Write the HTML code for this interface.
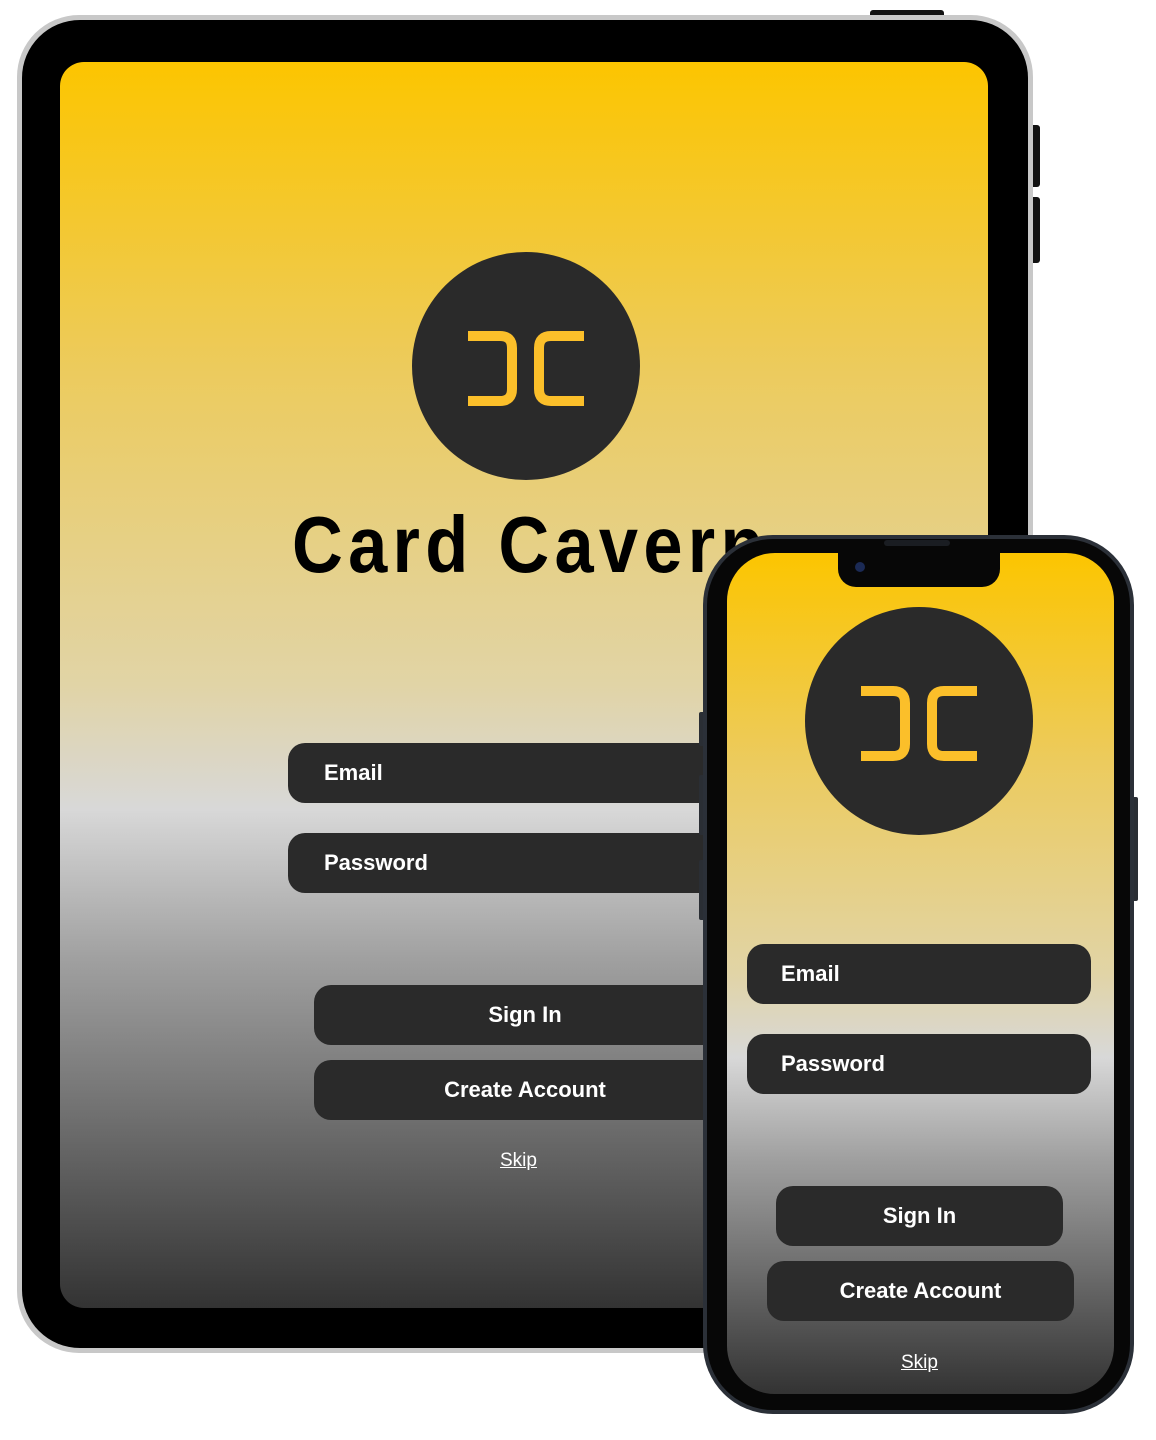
<!DOCTYPE html>
<html><head><meta charset="utf-8"><style>
html,body{margin:0;padding:0;background:#fff;width:1156px;height:1440px;overflow:hidden;position:relative;font-family:"Liberation Sans",sans-serif}
.abs{position:absolute}
.scr{background:linear-gradient(to bottom,#fcc500 0%,#eccb5e 25%,#e1d4a6 50%,#d8d8d8 60%,#a0a0a0 72%,#6e6e6e 85%,#333 100%)}
.fld{position:absolute;background:#2a2a2a;border-radius:17px;color:#fff;font-weight:bold;font-size:22px;line-height:60px;height:60px;box-sizing:border-box}
.btn{text-align:center}
</style></head><body>
<div class="abs" style="left:870px;top:10px;width:74px;height:12px;background:#111;border-radius:3px"></div>
<div class="abs" style="left:1026px;top:125px;width:14px;height:62px;background:#111;border-radius:3px"></div>
<div class="abs" style="left:1026px;top:197px;width:14px;height:66px;background:#111;border-radius:3px"></div>
<div class="abs" style="left:17px;top:15px;width:1016px;height:1338px;border-radius:62px;background:#c8c8c8"></div>
<div class="abs" style="left:22px;top:20px;width:1006px;height:1328px;border-radius:58px;background:#000"></div>
<div class="abs scr" style="left:60px;top:62px;width:928px;height:1246px;border-radius:24px;overflow:hidden">
  <div class="abs" style="left:232px;top:438px;font-weight:bold;font-size:80px;letter-spacing:6px;color:#000;white-space:nowrap;line-height:90px;transform:scaleX(0.88);transform-origin:0 0">Card Cavern</div>
  <div class="fld" style="left:228px;top:681px;width:700px;padding-left:36px">Email</div>
  <div class="fld" style="left:228px;top:771px;width:700px;padding-left:36px">Password</div>
  <div class="fld btn" style="left:254px;top:923px;width:422px">Sign In</div>
  <div class="fld btn" style="left:254px;top:998px;width:422px">Create Account</div>
  <div class="abs" style="left:440px;top:1088px;color:#fff;font-size:19px;text-decoration:underline">Skip</div>
</div>
<svg class="abs" style="left:0;top:0" width="1156" height="1440">
  <circle cx="526" cy="366" r="114" fill="#2a2a2a"/>
  <g fill="none" stroke="#fbbf2a" stroke-width="10">
    <path d="M468,336 H500 Q512,336 512,348 V389 Q512,401 500,401 H468"/>
    <path d="M584,336 H551 Q539,336 539,348 V389 Q539,401 551,401 H584"/>
  </g>
</svg>
<div class="abs" style="left:699px;top:712px;width:8px;height:34px;background:#2a2e34;border-radius:2px"></div>
<div class="abs" style="left:699px;top:775px;width:8px;height:60px;background:#2a2e34;border-radius:2px"></div>
<div class="abs" style="left:699px;top:860px;width:8px;height:60px;background:#2a2e34;border-radius:2px"></div>
<div class="abs" style="left:1130px;top:797px;width:8px;height:104px;background:#2a2e34;border-radius:2px"></div>
<div class="abs" style="left:703px;top:535px;width:431px;height:879px;border-radius:70px;background:#2b3038"></div>
<div class="abs" style="left:707px;top:539px;width:423px;height:871px;border-radius:66px;background:#070707"></div>
<div class="abs scr" style="left:727px;top:553px;width:387px;height:841px;border-radius:48px;overflow:hidden">
  <div class="fld" style="left:20px;top:391px;width:344px;padding-left:34px">Email</div>
  <div class="fld" style="left:20px;top:481px;width:344px;padding-left:34px">Password</div>
  <div class="fld btn" style="left:49px;top:633px;width:287px">Sign In</div>
  <div class="fld btn" style="left:40px;top:708px;width:307px">Create Account</div>
  <div class="abs" style="left:174px;top:799px;color:#fff;font-size:19px;text-decoration:underline">Skip</div>
</div>
<div class="abs" style="left:838px;top:550px;width:162px;height:37px;background:#070707;border-radius:0 0 18px 18px"></div>
<div class="abs" style="left:884px;top:540px;width:66px;height:6px;background:#1a1d22;border-radius:3px"></div>
<div class="abs" style="left:855px;top:562px;width:10px;height:10px;background:#1b2a55;border-radius:50%"></div>
<svg class="abs" style="left:0;top:0" width="1156" height="1440">
  <circle cx="919" cy="721" r="114" fill="#2a2a2a"/>
  <g fill="none" stroke="#fbbf2a" stroke-width="10">
    <path d="M861,691 H893 Q905,691 905,703 V744 Q905,756 893,756 H861"/>
    <path d="M977,691 H944 Q932,691 932,703 V744 Q932,756 944,756 H977"/>
  </g>
</svg>
</body></html>
